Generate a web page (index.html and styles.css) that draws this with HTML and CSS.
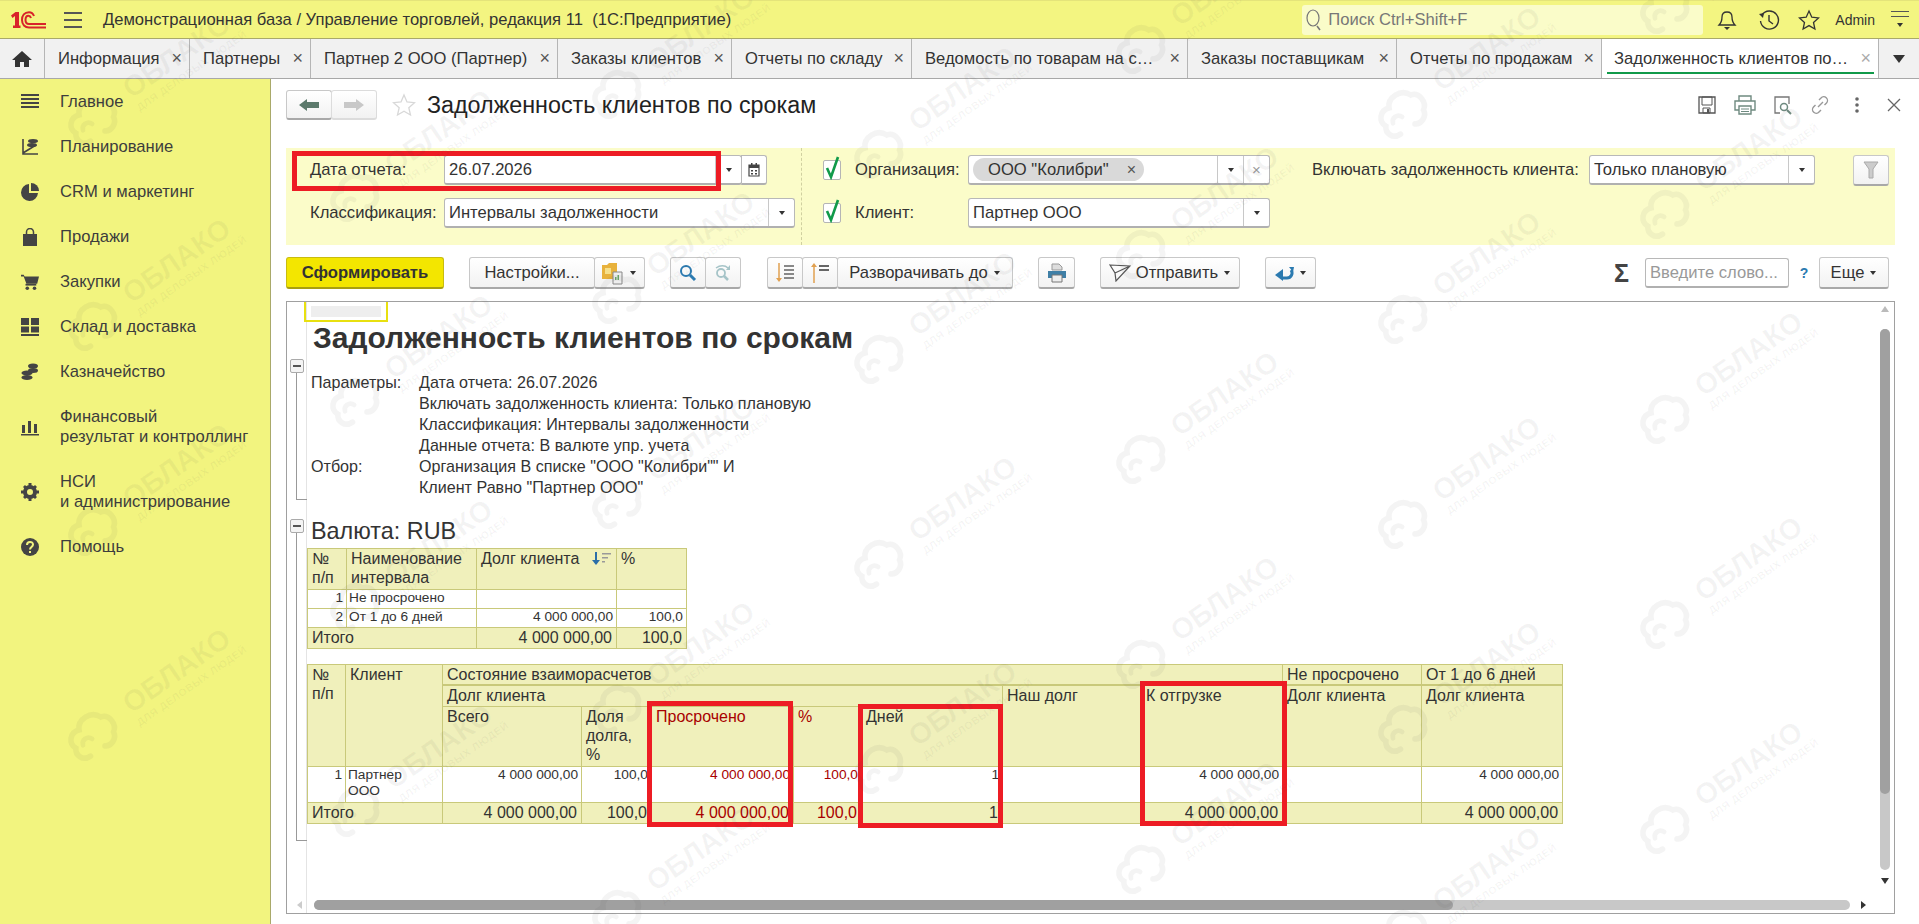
FILE: index.html
```html
<!DOCTYPE html>
<html lang="ru">
  <head>
    <meta charset="utf-8">
    <title>Задолженность клиентов по срокам</title>
    <link rel="stylesheet" href="styles.css">
  </head>
  <body>
    <svg class="defs" width="0" height="0">
      <symbol id="cloud" viewBox="0 0 60 60">
        <path d="M16 46C6 46 3 36 8 30 4 22 12 12 22 16 27 6 44 6 49 18 58 20 59 34 51 39 50 47 40 50 35 46" fill="none" stroke="currentColor" stroke-width="6" stroke-linecap="round"/>
        <path d="M16 32C18 26 26 26 28 32" fill="none" stroke="currentColor" stroke-width="5" stroke-linecap="round"/>
      </symbol>
      <symbol id="caret" viewBox="0 0 8 8"><path d="M1 2h6L4 6z" fill="#333"/></symbol>
      <symbol id="check" viewBox="0 0 18 24"><path d="M4 12l4 9L15 1" fill="none" stroke="#119a4a" stroke-width="2.6"/></symbol>
    </svg>

    <header class="topbar">
      <svg class="logo" width="35" height="18" viewBox="0 0 35 18">
        <path d="M0 4.500L4.500 1H8V14.500H9.500V17H2V14.500H4V5L1.500 7z" fill="#d8232a"/>
        <path d="M23 5C22 2.500 20 1.200 18 1.200 13.500 1.200 11 4.500 11 9 11 13.500 14 16.500 18 16.500H35" fill="none" stroke="#d8232a" stroke-width="2"/>
        <path d="M20 7C19.500 5.500 18.500 4.800 17.500 4.800 15.500 4.800 14.500 6.800 14.500 9 14.500 11.500 16 13 18 13H35" fill="none" stroke="#d8232a" stroke-width="2"/>
      </svg>
      <div class="burger"><i></i><i></i><i></i></div>
      <div class="app-title">Демонстрационная база / Управление торговлей, редакция 11&nbsp; (1С:Предприятие)</div>
      <div class="search">
        <svg width="16" height="24" viewBox="0 0 16 24"><ellipse cx="7" cy="10" rx="6" ry="8" fill="none" stroke="#777" stroke-width="1.200"/><path d="M11 18l3 4" stroke="#777" stroke-width="1.500"/></svg>
        <span>Поиск Ctrl+Shift+F</span>
      </div>
      <svg class="top-icon bell" width="20" height="22" viewBox="0 0 20 22"><path d="M2 16c2-2 3-4 3-8 0-3 2-5 5-5s5 2 5 5c0 4 1 6 3 8z" fill="none" stroke="#333" stroke-width="1.300"/><path d="M7 18h6l-3 3z" fill="#333"/></svg>
      <svg class="top-icon history" width="22" height="22" viewBox="0 0 22 22"><path d="M4 6a9 9 0 1 1-1.500 6" fill="none" stroke="#333" stroke-width="1.400"/><path d="M1 5l5-1-1 5z" fill="#333"/><path d="M11 6v6l4 3" fill="none" stroke="#333" stroke-width="1.400"/></svg>
      <svg class="top-icon star" width="22" height="22" viewBox="0 0 22 22"><path d="M11 2l2.800 6.200 6.700.7-5 4.500 1.400 6.600L11 16.600 5.100 20l1.400-6.600-5-4.500 6.700-.7z" fill="none" stroke="#333" stroke-width="1.300"/></svg>
      <span class="admin">Admin</span>
      <div class="top-menu"><i></i><i></i><svg width="10" height="8"><use href="#caret"/></svg></div>
    </header>

    <nav class="tabs">
      <div class="tab tab-home">
        <svg width="20" height="18" viewBox="0 0 20 18"><path d="M10 1L0 10h3v7h5v-5h4v5h5v-7h3z" fill="#333"/></svg>
      </div>
      <div class="tab tab-a">Информация <b>×</b></div>
      <div class="tab tab-b">Партнеры <b>×</b></div>
      <div class="tab tab-c">Партнер 2 ООО (Партнер) <b>×</b></div>
      <div class="tab tab-d">Заказы клиентов <b>×</b></div>
      <div class="tab tab-e">Отчеты по складу <b>×</b></div>
      <div class="tab tab-f">Ведомость по товарам на с… <b>×</b></div>
      <div class="tab tab-g">Заказы поставщикам <b>×</b></div>
      <div class="tab tab-h">Отчеты по продажам <b>×</b></div>
      <div class="tab tab-i active">Задолженность клиентов по… <b>×</b></div>
      <div class="tab tab-more"><svg width="14" height="10" viewBox="0 0 14 10"><path d="M1 1h12L7 9z" fill="#333"/></svg></div>
    </nav>

    <div class="main">
      <aside class="sidebar">
        <div class="side-item">
          <svg viewBox="0 0 18 18"><path d="M0 1h18v2H0zM0 5h18v2H0zM0 9h18v2H0zM0 13h18v2H0z" fill="#444"/></svg>
          <span>Главное</span>
        </div>
        <div class="side-item">
          <svg viewBox="0 0 18 18"><path d="M2 1v15h15M2 15L15 7" fill="none" stroke="#444" stroke-width="1.600"/><ellipse cx="12" cy="3" rx="5" ry="2" fill="#444"/><ellipse cx="11" cy="7" rx="5" ry="2" fill="#444"/></svg>
          <span>Планирование</span>
        </div>
        <div class="side-item">
          <svg viewBox="0 0 18 18"><path d="M8 1v9h9A8.500 8.500 0 1 1 8 1z" fill="#444"/><path d="M10 0a8 8 0 0 1 8 8h-8z" fill="#444"/></svg>
          <span>CRM и маркетинг</span>
        </div>
        <div class="side-item">
          <svg viewBox="0 0 18 18"><path d="M2 6h14v12H2z" fill="#444"/><path d="M5.500 7V4a3.500 3.500 0 0 1 7 0v3" fill="none" stroke="#444" stroke-width="1.500"/></svg>
          <span>Продажи</span>
        </div>
        <div class="side-item">
          <svg viewBox="0 0 20 18"><path d="M0 1h3l1 2h16l-2 8H6L3 3H0z" fill="#444"/><path d="M5 11h12v2H5z" fill="#444"/><circle cx="7" cy="16" r="2" fill="#444"/><circle cx="15" cy="16" r="2" fill="#444"/></svg>
          <span>Закупки</span>
        </div>
        <div class="side-item">
          <svg viewBox="0 0 18 18"><path d="M0 0h8v7H0zM10 0h8v7h-8zM0 8.500h8v6H0zM10 8.500h8v6h-8zM0 16h18v2H0z" fill="#444"/></svg>
          <span>Склад и доставка</span>
        </div>
        <div class="side-item">
          <svg viewBox="0 0 18 18"><ellipse cx="12" cy="3" rx="5" ry="2.500" fill="#444"/><ellipse cx="12" cy="7.500" rx="5" ry="2.500" fill="#444"/><ellipse cx="6" cy="10" rx="5.500" ry="2.500" fill="#444"/><ellipse cx="6" cy="14.500" rx="5.500" ry="2.500" fill="#444"/></svg>
          <span>Казначейство</span>
        </div>
        <div class="side-item">
          <svg viewBox="0 0 18 18"><path d="M1 7h3v8H1zM7 3h3v12H7zM13 6h3v9h-3zM0 16h18v1.500H0z" fill="#444"/></svg>
          <span>Финансовый<br>результат и контроллинг</span>
        </div>
        <div class="side-item">
          <svg viewBox="0 0 18 18"><circle cx="9" cy="9" r="5" fill="none" stroke="#444" stroke-width="4"/><path d="M7.500 0h3v4h-3zM7.500 14h3v4h-3zM0 7.500h4v3H0zM14 7.500h4v3h-4zM2 4l2-2 3 3-2 2zM11 13l2-2 3 3-2 2zM14 2l2 2-3 3-2-2zM5 11l2 2-3 3-2-2z" fill="#444"/></svg>
          <span>НСИ<br>и администрирование</span>
        </div>
        <div class="side-item">
          <svg viewBox="0 0 18 18"><circle cx="9" cy="9" r="9" fill="#444"/><path d="M6 7c0-4 6-4 6-.5 0 2.500-3 2.500-3 5" fill="none" stroke="#f2f47f" stroke-width="2"/><path d="M8 13h2v2H8z" fill="#f2f47f"/></svg>
          <span>Помощь</span>
        </div>
      </aside>

      <main class="content">
        <div class="form-head">
          <div class="btn-group">
            <button class="btn btn-nav"><svg width="20" height="12" viewBox="0 0 20 12"><path d="M0 6l8-6v3h12v6H8v3z" fill="#5c7a6c"/></svg></button>
            <button class="btn btn-nav"><svg width="20" height="12" viewBox="0 0 20 12"><path d="M20 6l-8-6v3H0v6h12v3z" fill="#c8c8c8"/></svg></button>
          </div>
          <svg class="fav" width="24" height="24" viewBox="0 0 24 24"><path d="M12 2l3 7 7.500.7-5.700 5 1.700 7.300-6.500-3.800L5.500 22l1.700-7.300-5.700-5L9 9z" fill="none" stroke="#d8d8d8" stroke-width="1.300"/></svg>
          <h1 class="form-title">Задолженность клиентов по срокам</h1>
          <div class="head-icons">
            <svg width="20" height="20" viewBox="0 0 20 20"><path d="M2 2h16v16H2z" fill="none" stroke="#555" stroke-width="1.300"/><path d="M5 2h10v8H5zM6 13h7v5H6z" fill="none" stroke="#555"/><path d="M10 14h2v4h-2z" fill="#555"/></svg>
            <svg width="22" height="20" viewBox="0 0 22 20"><path d="M5 6V1h12v5M5 15H1V6h20v9h-4" fill="none" stroke="#6f8a80" stroke-width="1.400"/><path d="M5 11h12v8H5z" fill="none" stroke="#6f8a80" stroke-width="1.400"/><path d="M7 14h8M7 16.500h8" stroke="#6f8a80"/></svg>
            <svg width="20" height="20" viewBox="0 0 20 20"><path d="M7 18H2V2h14v7" fill="none" stroke="#777" stroke-width="1.300"/><circle cx="11" cy="12" r="3.500" fill="none" stroke="#6f8a80" stroke-width="1.500"/><path d="M14 15l4 4" stroke="#6f8a80" stroke-width="2"/></svg>
            <svg width="20" height="20" viewBox="0 0 20 20"><path d="M8 12l5-5M9 5l2-2a3.500 3.500 0 0 1 5.500 5l-2 2M11 15l-2 2a3.500 3.500 0 0 1-5.500-5l2-2" fill="none" stroke="#999" stroke-width="1.400"/></svg>
            <svg width="20" height="20" viewBox="-7 0 20 20"><circle cx="3" cy="4" r="1.800" fill="#666"/><circle cx="3" cy="10" r="1.800" fill="#666"/><circle cx="3" cy="16" r="1.800" fill="#666"/></svg>
            <svg width="20" height="20" viewBox="-3 -3 20 20"><path d="M1 1l12 12M13 1L1 13" stroke="#666" stroke-width="1.300"/></svg>
          </div>
        </div>

        <section class="filters">
          <div class="filter-col col-date">
            <div class="filter-row">
              <label class="lbl lbl-left">Дата отчета:</label>
              <div class="field fld-date"><span class="val">26.07.2026</span><span class="drop"><svg width="8" height="8"><use href="#caret"/></svg></span></div>
              <div class="cal-btn"><svg width="12" height="14" viewBox="0 0 12 14"><path d="M1 2h10v11H1z" fill="none" stroke="#444" stroke-width="1.200"/><path d="M1 2h10v3H1zM3 0h1.500v3H3zM7.500 0H9v3H7.500zM3 7h2v1.500H3zM7 7h2v1.500H7zM3 10h2v1.500H3zM7 10h2v1.500H7z" fill="#444"/></svg></div>
            </div>
            <div class="filter-row">
              <label class="lbl lbl-left">Классификация:</label>
              <div class="field fld-class"><span class="val">Интервалы задолженности</span><span class="drop"><svg width="8" height="8"><use href="#caret"/></svg></span></div>
            </div>
          </div>
          <div class="filter-col col-org">
            <div class="filter-row">
              <span class="check"><svg width="18" height="24"><use href="#check"/></svg></span>
              <label class="lbl lbl-org">Организация:</label>
              <div class="field fld-org"><span class="chip">ООО "Колибри" <b>×</b></span><span class="drop"><svg width="8" height="8"><use href="#caret"/></svg></span><span class="drop drop-x">×</span></div>
            </div>
            <div class="filter-row">
              <span class="check"><svg width="18" height="24"><use href="#check"/></svg></span>
              <label class="lbl lbl-org">Клиент:</label>
              <div class="field fld-org"><span class="val">Партнер ООО</span><span class="drop"><svg width="8" height="8"><use href="#caret"/></svg></span></div>
            </div>
          </div>
          <div class="filter-col col-debt">
            <div class="filter-row">
              <label class="lbl lbl-debt">Включать задолженность клиента:</label>
              <div class="field fld-debt"><span class="val">Только плановую</span><span class="drop"><svg width="8" height="8"><use href="#caret"/></svg></span></div>
              <button class="btn btn-funnel"><svg width="16" height="18" viewBox="0 0 16 18"><path d="M1 1h14L10 8v9H6V8z" fill="#ccc" stroke="#aaa"/></svg></button>
            </div>
          </div>
        </section>

        <div class="toolbar">
          <button class="btn btn-run">Сформировать</button>
          <div class="btn-group tool-group">
            <button class="btn btn-settings">Настройки...</button>
            <button class="btn btn-variant">
              <svg width="22" height="24" viewBox="0 0 22 24"><path d="M0 4h5l2-2h8v16H0z" fill="#e8b23c"/><path d="M3 7h6v6H3z" fill="#f6e08a"/><path d="M11 11h9v12h-9z" fill="#eee" stroke="#888"/><path d="M13 19h1.500v-3H13zM15.500 19H17v-5h-1.500z" fill="#6aa86a"/></svg>
              <svg width="8" height="8"><use href="#caret"/></svg>
            </button>
          </div>
          <div class="btn-group tool-group">
            <button class="btn btn-square"><svg width="18" height="18" viewBox="0 0 18 18"><circle cx="7" cy="7" r="5" fill="none" stroke="#2b7ab0" stroke-width="2"/><path d="M11 11l5 5" stroke="#2b7ab0" stroke-width="3"/></svg></button>
            <button class="btn btn-square"><svg width="18" height="18" viewBox="0 0 18 18"><circle cx="7" cy="9" r="4" fill="none" stroke="#a6c4c8" stroke-width="1.800"/><path d="M10 12l4 4" stroke="#a6c4c8" stroke-width="2.500"/><path d="M2 4c4-3 9-3 12 0" fill="none" stroke="#a6c4c8" stroke-width="1.500"/><path d="M16 1v5h-4z" fill="#a6c4c8"/></svg></button>
          </div>
          <div class="btn-group tool-group sort-group">
            <button class="btn btn-sort"><svg width="20" height="20" viewBox="0 0 20 20"><path d="M4 0v16" stroke="#e0a050" stroke-width="1.500"/><path d="M1 15h6l-3 4z" fill="#e0a050"/><path d="M9 2h10v2H9zM9 6h10v2H9zM9 10h10v2H9zM9 14h10v2H9z" fill="#888"/></svg></button>
            <button class="btn btn-sort"><svg width="20" height="20" viewBox="0 0 20 20"><path d="M4 3v17" stroke="#e0a050" stroke-width="1.500"/><path d="M1 4h6L4 0z" fill="#e0a050"/><path d="M9 2h10v2H9zM9 6h10v2H9z" fill="#666"/></svg></button>
            <button class="btn btn-expand">Разворачивать до <svg width="8" height="8"><use href="#caret"/></svg></button>
          </div>
          <button class="btn btn-print tool-group"><svg width="20" height="20" viewBox="0 0 20 20"><path d="M5 7V1h7l3 3v3z" fill="#ddd" stroke="#999"/><path d="M1 8h18v7H1z" fill="#3f7fa6"/><path d="M5 12h10v7H5z" fill="#eee" stroke="#777"/></svg></button>
          <button class="btn btn-send tool-group">
            <svg width="22" height="18" viewBox="0 0 22 18"><path d="M1 1l20 1L7 17 6 9z M6 9L21 2" fill="none" stroke="#555" stroke-width="1.200"/></svg>
            Отправить <svg width="8" height="8"><use href="#caret"/></svg>
          </button>
          <button class="btn btn-reply tool-group">
            <svg width="20" height="18" viewBox="0 0 20 18"><path d="M8 14h5a5 5 0 0 0 4-8" fill="none" stroke="#2b7ab0" stroke-width="3"/><path d="M9 8v12L1 14z" fill="#2b7ab0" transform="translate(0 -3)"/><path d="M15 3l5 0-1 5z" fill="#2b7ab0"/></svg>
            <svg width="8" height="8"><use href="#caret"/></svg>
          </button>
          <span class="sigma">Σ</span>
          <div class="field fld-word"><span class="val hint">Введите слово...</span></div>
          <span class="qmark">?</span>
          <button class="btn btn-more">Еще <svg width="8" height="8"><use href="#caret"/></svg></button>
        </div>

        <section class="report">
          <div class="outline outline-a"><span class="minus"></span></div>
          <div class="outline outline-b"><span class="minus"></span></div>
          <div class="cell-cursor"><i></i></div>

          <div class="sheet">
            <h2 class="report-title">Задолженность клиентов по срокам</h2>
            <div class="params">
              <span>Параметры:</span><span>Дата отчета: 26.07.2026</span>
              <span></span><span>Включать задолженность клиента: Только плановую</span>
              <span></span><span>Классификация: Интервалы задолженности</span>
              <span></span><span>Данные отчета: В валюте упр. учета</span>
              <span>Отбор:</span><span>Организация В списке "ООО "Колибри"" И</span>
              <span></span><span>Клиент Равно "Партнер ООО"</span>
            </div>
            <h3 class="currency">Валюта: RUB</h3>

            <table class="grid grid-short">
              <colgroup><col class="c39"><col class="c130"><col class="c140"><col class="c70"></colgroup>
              <tr class="r41 head">
                <td>№<br>п/п</td><td>Наименование<br>интервала</td>
                <td class="sortable">Долг клиента <svg width="20" height="14" viewBox="0 0 20 14"><path d="M4 0v9" stroke="#2b6ea8" stroke-width="2"/><path d="M0 8h8l-4 5z" fill="#2b6ea8"/><path d="M10 1h9v1.500h-9zM10 5h6v1.500h-6zM10 9h3v1.500h-3z" fill="#999"/></svg></td>
                <td>%</td>
              </tr>
              <tr class="r19 body"><td class="num">1</td><td>Не просрочено</td><td></td><td></td></tr>
              <tr class="r19 body"><td class="num">2</td><td>От 1 до 6 дней</td><td class="num">4 000 000,00</td><td class="num">100,0</td></tr>
              <tr class="r21 total"><td colspan="2">Итого</td><td class="num">4 000 000,00</td><td class="num">100,0</td></tr>
            </table>

            <table class="grid grid-long">
              <colgroup>
                <col class="c38"><col class="c97"><col class="c139"><col class="c70"><col class="c142"><col class="c68"><col class="c141"><col class="c139"><col class="c141"><col class="c139"><col class="c141">
              </colgroup>
              <tr class="r20 head thick">
                <td rowspan="3">№<br>п/п</td><td rowspan="3">Клиент</td>
                <td colspan="7">Состояние взаиморасчетов</td>
                <td>Не просрочено</td><td>От 1 до 6 дней</td>
              </tr>
              <tr class="r21 head">
                <td colspan="5">Долг клиента</td><td rowspan="2">Наш долг</td><td rowspan="2">К отгрузке</td>
                <td rowspan="2">Долг клиента</td><td rowspan="2">Долг клиента</td>
              </tr>
              <tr class="r60 head">
                <td>Всего</td><td>Доля<br>долга,<br>%</td><td class="due">Просрочено</td><td class="due">%</td><td>Дней</td>
              </tr>
              <tr class="r36 body">
                <td class="num">1</td><td>Партнер<br>ООО</td><td class="num">4 000 000,00</td><td class="num">100,0</td>
                <td class="num due">4 000 000,00</td><td class="num due">100,0</td><td class="num">1</td><td></td>
                <td class="num">4 000 000,00</td><td></td><td class="num">4 000 000,00</td>
              </tr>
              <tr class="r21 total">
                <td colspan="2">Итого</td><td class="num">4 000 000,00</td><td class="num">100,0</td>
                <td class="num due">4 000 000,00</td><td class="num due">100,0</td><td class="num">1</td><td></td>
                <td class="num">4 000 000,00</td><td></td><td class="num">4 000 000,00</td>
              </tr>
            </table>
          </div>

          <div class="scroll-v"><i></i></div>
          <div class="scroll-h"><i></i></div>
          <span class="arrow arrow-up"></span>
          <span class="arrow arrow-down"></span>
          <span class="arrow arrow-left"></span>
          <span class="arrow arrow-right"></span>
        </section>
      </main>
    </div>

    <!-- annotations drawn over the screenshot -->
    <div class="mark mark-date"></div>
    <div class="mark mark-due"></div>
    <div class="mark mark-days"></div>
    <div class="mark mark-ship"></div>

    <!-- watermark -->
    <div class="wm-layer" aria-hidden="true">
      <div class="wm-col">
        <div class="wm"><svg><use href="#cloud"/></svg><p>ОБЛАКО<small>для деловых людей</small></p></div>
        <div class="wm"><svg><use href="#cloud"/></svg><p>ОБЛАКО<small>для деловых людей</small></p></div>
        <div class="wm"><svg><use href="#cloud"/></svg><p>ОБЛАКО<small>для деловых людей</small></p></div>
        <div class="wm"><svg><use href="#cloud"/></svg><p>ОБЛАКО<small>для деловых людей</small></p></div>
      </div>
      <div class="wm-col">
        <div class="wm"><svg><use href="#cloud"/></svg><p>ОБЛАКО<small>для деловых людей</small></p></div>
        <div class="wm"><svg><use href="#cloud"/></svg><p>ОБЛАКО<small>для деловых людей</small></p></div>
        <div class="wm"><svg><use href="#cloud"/></svg><p>ОБЛАКО<small>для деловых людей</small></p></div>
        <div class="wm"><svg><use href="#cloud"/></svg><p>ОБЛАКО<small>для деловых людей</small></p></div>
      </div>
      <div class="wm-col">
        <div class="wm"><svg><use href="#cloud"/></svg><p>ОБЛАКО<small>для деловых людей</small></p></div>
        <div class="wm"><svg><use href="#cloud"/></svg><p>ОБЛАКО<small>для деловых людей</small></p></div>
        <div class="wm"><svg><use href="#cloud"/></svg><p>ОБЛАКО<small>для деловых людей</small></p></div>
        <div class="wm"><svg><use href="#cloud"/></svg><p>ОБЛАКО<small>для деловых людей</small></p></div>
        <div class="wm"><svg><use href="#cloud"/></svg><p>ОБЛАКО<small>для деловых людей</small></p></div>
      </div>
      <div class="wm-col">
        <div class="wm"><svg><use href="#cloud"/></svg><p>ОБЛАКО<small>для деловых людей</small></p></div>
        <div class="wm"><svg><use href="#cloud"/></svg><p>ОБЛАКО<small>для деловых людей</small></p></div>
        <div class="wm"><svg><use href="#cloud"/></svg><p>ОБЛАКО<small>для деловых людей</small></p></div>
        <div class="wm"><svg><use href="#cloud"/></svg><p>ОБЛАКО<small>для деловых людей</small></p></div>
      </div>
      <div class="wm-col">
        <div class="wm"><svg><use href="#cloud"/></svg><p>ОБЛАКО<small>для деловых людей</small></p></div>
        <div class="wm"><svg><use href="#cloud"/></svg><p>ОБЛАКО<small>для деловых людей</small></p></div>
        <div class="wm"><svg><use href="#cloud"/></svg><p>ОБЛАКО<small>для деловых людей</small></p></div>
        <div class="wm"><svg><use href="#cloud"/></svg><p>ОБЛАКО<small>для деловых людей</small></p></div>
        <div class="wm"><svg><use href="#cloud"/></svg><p>ОБЛАКО<small>для деловых людей</small></p></div>
      </div>
      <div class="wm-col">
        <div class="wm"><svg><use href="#cloud"/></svg><p>ОБЛАКО<small>для деловых людей</small></p></div>
        <div class="wm"><svg><use href="#cloud"/></svg><p>ОБЛАКО<small>для деловых людей</small></p></div>
        <div class="wm"><svg><use href="#cloud"/></svg><p>ОБЛАКО<small>для деловых людей</small></p></div>
        <div class="wm"><svg><use href="#cloud"/></svg><p>ОБЛАКО<small>для деловых людей</small></p></div>
        <div class="wm"><svg><use href="#cloud"/></svg><p>ОБЛАКО<small>для деловых людей</small></p></div>
      </div>
      <div class="wm-col">
        <div class="wm"><svg><use href="#cloud"/></svg><p>ОБЛАКО<small>для деловых людей</small></p></div>
        <div class="wm"><svg><use href="#cloud"/></svg><p>ОБЛАКО<small>для деловых людей</small></p></div>
        <div class="wm"><svg><use href="#cloud"/></svg><p>ОБЛАКО<small>для деловых людей</small></p></div>
        <div class="wm"><svg><use href="#cloud"/></svg><p>ОБЛАКО<small>для деловых людей</small></p></div>
        <div class="wm"><svg><use href="#cloud"/></svg><p>ОБЛАКО<small>для деловых людей</small></p></div>
      </div>
    </div>
  </body>
</html>
```

FILE: styles.css
```css
* {
  box-sizing: border-box;
}
html,
body {
  margin: 0;
  height: 924px;
  overflow: hidden;
}
body {
  position: relative;
  font-family: "Liberation Sans", Arial, sans-serif;
  font-size: 16.6px;
  color: #333;
  background: #fff;
}
.defs {
  position: absolute;
}

/* top bar */
.topbar {
  display: flex;
  align-items: center;
  height: 39px;
  padding-right: 10px;
  background: #f3f581;
  border-top: 1px solid #e4e47a;
  border-bottom: 1px solid #a9a96a;
}
.logo {
  margin-left: 11px;
}
.burger {
  display: flex;
  flex-direction: column;
  gap: 5px;
  margin-left: 18px;
  width: 18px;
}
.burger i {
  height: 2px;
  background: #555;
}
.app-title {
  margin-left: 21px;
  color: #333;
  white-space: nowrap;
}
.search {
  display: flex;
  align-items: center;
  gap: 6px;
  margin-left: auto;
  width: 401px;
  height: 30px;
  padding-left: 4px;
  background: #fafcc9;
  border-radius: 3px;
  color: #777;
}
.top-icon {
  flex: none;
}
.bell {
  margin-left: 14px;
}
.history {
  margin-left: 21px;
}
.star {
  margin-left: 18px;
}
.admin {
  margin-left: 15px;
  font-size: 14px;
}
.top-menu {
  display: flex;
  flex-direction: column;
  align-items: center;
  gap: 4px;
  width: 18px;
  margin-left: 16px;
}
.top-menu i {
  width: 18px;
  height: 1px;
  background: #555;
}

/* tabs */
.tabs {
  display: flex;
  height: 40px;
  background: #f1f1f1;
  border-bottom: 1px solid #a8a8a8;
}
.tab {
  display: flex;
  align-items: center;
  justify-content: space-between;
  padding: 0 7px 0 13px;
  border-right: 1px solid #b5b5b5;
  white-space: nowrap;
  position: relative;
}
.tab b {
  font-weight: normal;
  font-size: 18px;
  color: #555;
}
.tab-home {
  width: 45px;
  justify-content: center;
  padding: 0;
}
.tab-a { width: 145px; }
.tab-b { width: 121px; }
.tab-c { width: 247px; }
.tab-d { width: 174px; }
.tab-e { width: 180px; }
.tab-f { width: 276px; }
.tab-g { width: 209px; }
.tab-h { width: 205px; }
.tab-i { width: 277px; }
.tab-more {
  flex: 1;
  justify-content: center;
  padding: 0;
  border-right: 0;
}
.tab.active {
  background: #fff;
  padding-left: 12px;
}
.tab.active b {
  color: #aaa;
}
.tab.active::after {
  content: "";
  position: absolute;
  left: 5px;
  right: 4px;
  bottom: 4px;
  height: 2px;
  background: #119a4a;
}

/* sidebar */
.main {
  display: flex;
  height: 845px;
}
.sidebar {
  flex: none;
  width: 271px;
  background: #f2f47f;
  border-right: 1px solid #a9a96a;
}
.side-item {
  display: flex;
  align-items: center;
  padding: 12.5px 0 12.5px 21px;
  line-height: 20px;
  color: #3d3d3d;
}
.side-item svg {
  flex: none;
  width: 18px;
  height: 18px;
  margin-right: 21px;
}

/* form */
.content {
  flex: 1;
  padding: 11px 24px 0 15px;
}
.form-head {
  display: flex;
  align-items: center;
  height: 30px;
  margin-bottom: 28px;
}
.form-title {
  margin: 0 0 0 11px;
  font-size: 23.3px;
  font-weight: normal;
  color: #222;
}
.fav {
  margin-left: 15px;
}
.head-icons {
  display: flex;
  align-items: center;
  gap: 17px;
  margin-left: auto;
  margin-right: -9px;
}
.btn {
  display: inline-flex;
  align-items: center;
  justify-content: center;
  gap: 5px;
  height: 32px;
  padding: 0;
  border: 1px solid #c8c8c8;
  border-bottom: 2px solid #a8a8a8;
  border-radius: 3px;
  background: linear-gradient(#ffffff, #f2f2f2);
  font: inherit;
  color: #333;
}
.btn-group {
  display: flex;
}
.btn-group .btn + .btn {
  margin-left: -1px;
}
.btn-nav {
  width: 46px;
  height: 30px;
}
.btn-nav + .btn-nav {
  border-color: #dcdcdc;
}

/* filters */
.filters {
  display: flex;
  height: 97px;
  background: #fbfcc9;
}
.filter-col {
  display: flex;
  flex-direction: column;
  gap: 13px;
  padding-top: 7px;
}
.filter-row {
  display: flex;
  align-items: center;
  height: 30px;
}
.col-date {
  width: 515px;
  padding-left: 24px;
}
.col-org {
  width: 511px;
  padding-left: 21px;
  border-left: 1px dashed #d0d0a0;
}
.lbl {
  white-space: nowrap;
}
.lbl-left {
  width: 134px;
}
.lbl-org {
  width: 113px;
  margin-left: 14px;
}
.lbl-debt {
  width: 277px;
}
.check {
  display: flex;
  align-items: center;
  justify-content: center;
  flex: none;
  width: 18px;
  height: 20px;
  background: #fff;
  border: 1px solid #b5b5b5;
  border-radius: 2px;
}
.check svg {
  flex: none;
  margin-top: -5px;
}
.field {
  display: flex;
  align-items: stretch;
  height: 30px;
  background: #fff;
  border: 1px solid #b8b8b8;
  border-bottom: 2px solid #b0b0b0;
  border-radius: 3px;
}
.val {
  flex: 1;
  align-self: center;
  padding-left: 4px;
  white-space: nowrap;
}
.hint {
  color: #999;
}
.drop {
  display: flex;
  align-items: center;
  justify-content: center;
  width: 26px;
  border-left: 1px solid #c8c8c8;
}
.drop-x {
  color: #999;
  font-size: 15px;
}
.fld-date { width: 298px; }
.fld-class { width: 351px; }
.fld-org { width: 302px; }
.fld-debt { width: 226px; }
.fld-word {
  width: 144px;
  height: 30px;
  margin-left: 16px;
}
.cal-btn {
  display: flex;
  align-items: center;
  justify-content: center;
  width: 26px;
  height: 30px;
  background: #fff;
  border: 1px solid #b8b8b8;
  border-bottom: 2px solid #b0b0b0;
  border-radius: 0 3px 3px 0;
  margin-left: -1px;
}
.chip {
  display: flex;
  align-items: center;
  justify-content: space-between;
  align-self: center;
  width: 171px;
  height: 23px;
  margin: 0 auto 0 4px;
  padding: 0 8px 0 15px;
  background: #d9d9d9;
  border-radius: 12px;
  white-space: nowrap;
}
.chip b {
  font-weight: normal;
  font-size: 16px;
  color: #555;
}
.btn-funnel {
  width: 36px;
  height: 31px;
  margin-left: 38px;
}

/* toolbar */
.toolbar {
  display: flex;
  align-items: center;
  margin: 12px 6px 12px 0;
  height: 32px;
}
.btn-run {
  width: 158px;
  background: #f3e600;
  border-color: #c8bc10;
  border-bottom-color: #a89e10;
  font-weight: bold;
}
.btn-settings {
  width: 126px;
}
.btn-variant {
  width: 51px;
}
.btn-square {
  width: 36px;
}
.btn-sort {
  width: 36px;
}
.btn-expand {
  width: 176px;
}
.btn-print {
  width: 37px;
}
.btn-send {
  width: 140px;
}
.btn-reply {
  width: 51px;
  margin-left: 23px;
}
.btn-more {
  width: 70px;
}
.tool-group {
  margin-left: 25px;
}
.sort-group {
  margin-left: 26px;
}
.sigma {
  margin-left: auto;
  font-size: 25px;
  font-weight: bold;
  color: #444;
}
.qmark {
  width: 30px;
  text-align: center;
  color: #2b7ab0;
  font-size: 14px;
  font-weight: bold;
}

/* report */
.report {
  position: relative;
  height: 613px;
  border: 1px solid #a0a0a0;
  overflow: hidden;
}
.sheet {
  padding-left: 20px;
  height: 100%;
  position: relative;
}
.sheet::before {
  content: "";
  position: absolute;
  left: 19px;
  top: 0;
  bottom: 0;
  width: 1px;
  background: #e4e4e4;
}
.report-title {
  margin: 0;
  padding: 20px 0 0 6px;
  font-size: 30px;
  line-height: 32px;
  font-weight: bold;
  color: #333;
}
.params {
  display: grid;
  grid-template-columns: 108px 1fr;
  margin: 18px 0 0 4px;
  font-size: 16.1px;
  line-height: 21px;
}
.currency {
  margin: 20px 0 4px 4px;
  font-size: 23.4px;
  line-height: 26px;
  font-weight: normal;
}
.grid {
  border-collapse: collapse;
  table-layout: fixed;
}
.grid-short { width: 379px; }
.grid-long {
  width: 1255px;
  margin-top: 15px;
}
.grid td {
  padding: 0 3px;
  border: 1px solid #c9c97a;
  vertical-align: top;
  overflow: hidden;
  white-space: nowrap;
}
.grid .head td {
  background: #f0f0bb;
  font-size: 16px;
  line-height: 19px;
  padding: 0 4px;
}
.grid .body td {
  font-size: 13.7px;
  line-height: 16px;
  padding: 0 3px 0 2px;
}
.grid .total td {
  background: #f0f0bb;
  font-size: 16px;
  line-height: 20px;
  padding: 0 4px;
}
.grid .thick td:nth-child(n + 3) {
  border-bottom-width: 2px;
}
.grid .due {
  color: #a80000;
}
.num {
  text-align: right;
}
.sortable svg {
  vertical-align: -2px;
  margin-left: 8px;
}
.c38 { width: 38px; }
.c39 { width: 39px; }
.c68 { width: 68px; }
.c70 { width: 70px; }
.c97 { width: 97px; }
.c130 { width: 130px; }
.c139 { width: 139px; }
.c140 { width: 140px; }
.c141 { width: 141px; }
.c142 { width: 142px; }
.r19 { height: 19px; }
.r20 { height: 20px; }
.r21 { height: 21px; }
.r36 { height: 36px; }
.r41 { height: 41px; }
.r60 { height: 60px; }

/* outline brackets in the report gutter */
.outline {
  position: absolute;
  left: 9px;
  width: 11px;
  border-left: 1px solid #999;
  border-bottom: 1px solid #999;
  z-index: 1;
}
.outline-a {
  top: 64px;
  height: 134px;
}
.outline-b {
  top: 224px;
  height: 315px;
}
.minus {
  position: absolute;
  left: -7px;
  top: -7px;
  width: 14px;
  height: 14px;
  background: #f4f4f4;
  border: 1px solid #aaa;
  border-radius: 2px;
}
.minus::after {
  content: "";
  position: absolute;
  left: 2px;
  right: 2px;
  top: 5px;
  height: 2px;
  background: #555;
}
.cell-cursor {
  position: absolute;
  left: 17px;
  top: -1px;
  width: 84px;
  height: 21px;
  padding: 5px;
  border: 2px solid #e8e010;
  border-top: 0;
  z-index: 1;
}
.cell-cursor i {
  display: block;
  height: 11px;
  background: #eeeeee;
}

/* report scrollbars */
.scroll-v {
  position: absolute;
  right: 4px;
  top: 27px;
  width: 10px;
  height: 541px;
  background: #c8c8c8;
  border-radius: 5px;
  z-index: 2;
}
.scroll-v i {
  display: block;
  height: 465px;
  background: #a0a0a0;
  border-radius: 5px;
}
.scroll-h {
  position: absolute;
  left: 27px;
  bottom: 3px;
  width: 1536px;
  height: 10px;
  background: #c8c8c8;
  border-radius: 5px;
  z-index: 2;
}
.scroll-h i {
  display: block;
  width: 1139px;
  height: 10px;
  background: #a0a0a0;
  border-radius: 5px;
}
.arrow {
  position: absolute;
  width: 0;
  height: 0;
  border: 4px solid transparent;
  z-index: 2;
}
.arrow-up {
  right: 5px;
  top: 4px;
  border-top: 0;
  border-bottom: 6px solid #bbb;
}
.arrow-down {
  right: 5px;
  bottom: 29px;
  border-bottom: 0;
  border-top: 6px solid #333;
}
.arrow-left {
  left: 10px;
  bottom: 4px;
  border-left: 0;
  border-right: 5px solid #ccc;
}
.arrow-right {
  left: 1574px;
  bottom: 4px;
  border-right: 0;
  border-left: 5px solid #333;
}

/* red annotation frames */
.mark {
  position: absolute;
  border: 5px solid #ed1c24;
  z-index: 5;
}
.mark-date {
  left: 292px;
  top: 151px;
  width: 429px;
  height: 40px;
}
.mark-due {
  left: 647px;
  top: 701px;
  width: 146px;
  height: 126px;
}
.mark-days {
  left: 858px;
  top: 704px;
  width: 145px;
  height: 124px;
}
.mark-ship {
  left: 1140px;
  top: 681px;
  width: 147px;
  height: 145px;
}

/* watermark */
.wm-layer {
  position: absolute;
  inset: 0;
  display: flex;
  padding-left: 22px;
  pointer-events: none;
  overflow: hidden;
  z-index: 10;
}
.wm-col {
  flex: none;
  width: 262px;
}
.wm-col:nth-child(1) { margin-top: -24px; }
.wm-col:nth-child(2) { margin-top: 52px; }
.wm-col:nth-child(3) { margin-top: -51px; }
.wm-col:nth-child(4) { margin-top: 9px; }
.wm-col:nth-child(5) { margin-top: -96px; }
.wm-col:nth-child(6) { margin-top: -31px; }
.wm-col:nth-child(7) { margin-top: -136px; }
.wm {
  display: flex;
  align-items: center;
  justify-content: center;
  gap: 16px;
  height: 205px;
  transform: rotate(-35deg);
  color: rgba(70, 70, 70, 0.06);
}
.wm svg {
  flex: none;
  width: 56px;
  height: 56px;
}
.wm p {
  margin: 0;
  font-size: 29px;
  line-height: 30px;
  font-weight: bold;
  white-space: nowrap;
}
.wm small {
  display: block;
  font-size: 10.5px;
  line-height: 12px;
  text-transform: uppercase;
  letter-spacing: 0.5px;
}
```
